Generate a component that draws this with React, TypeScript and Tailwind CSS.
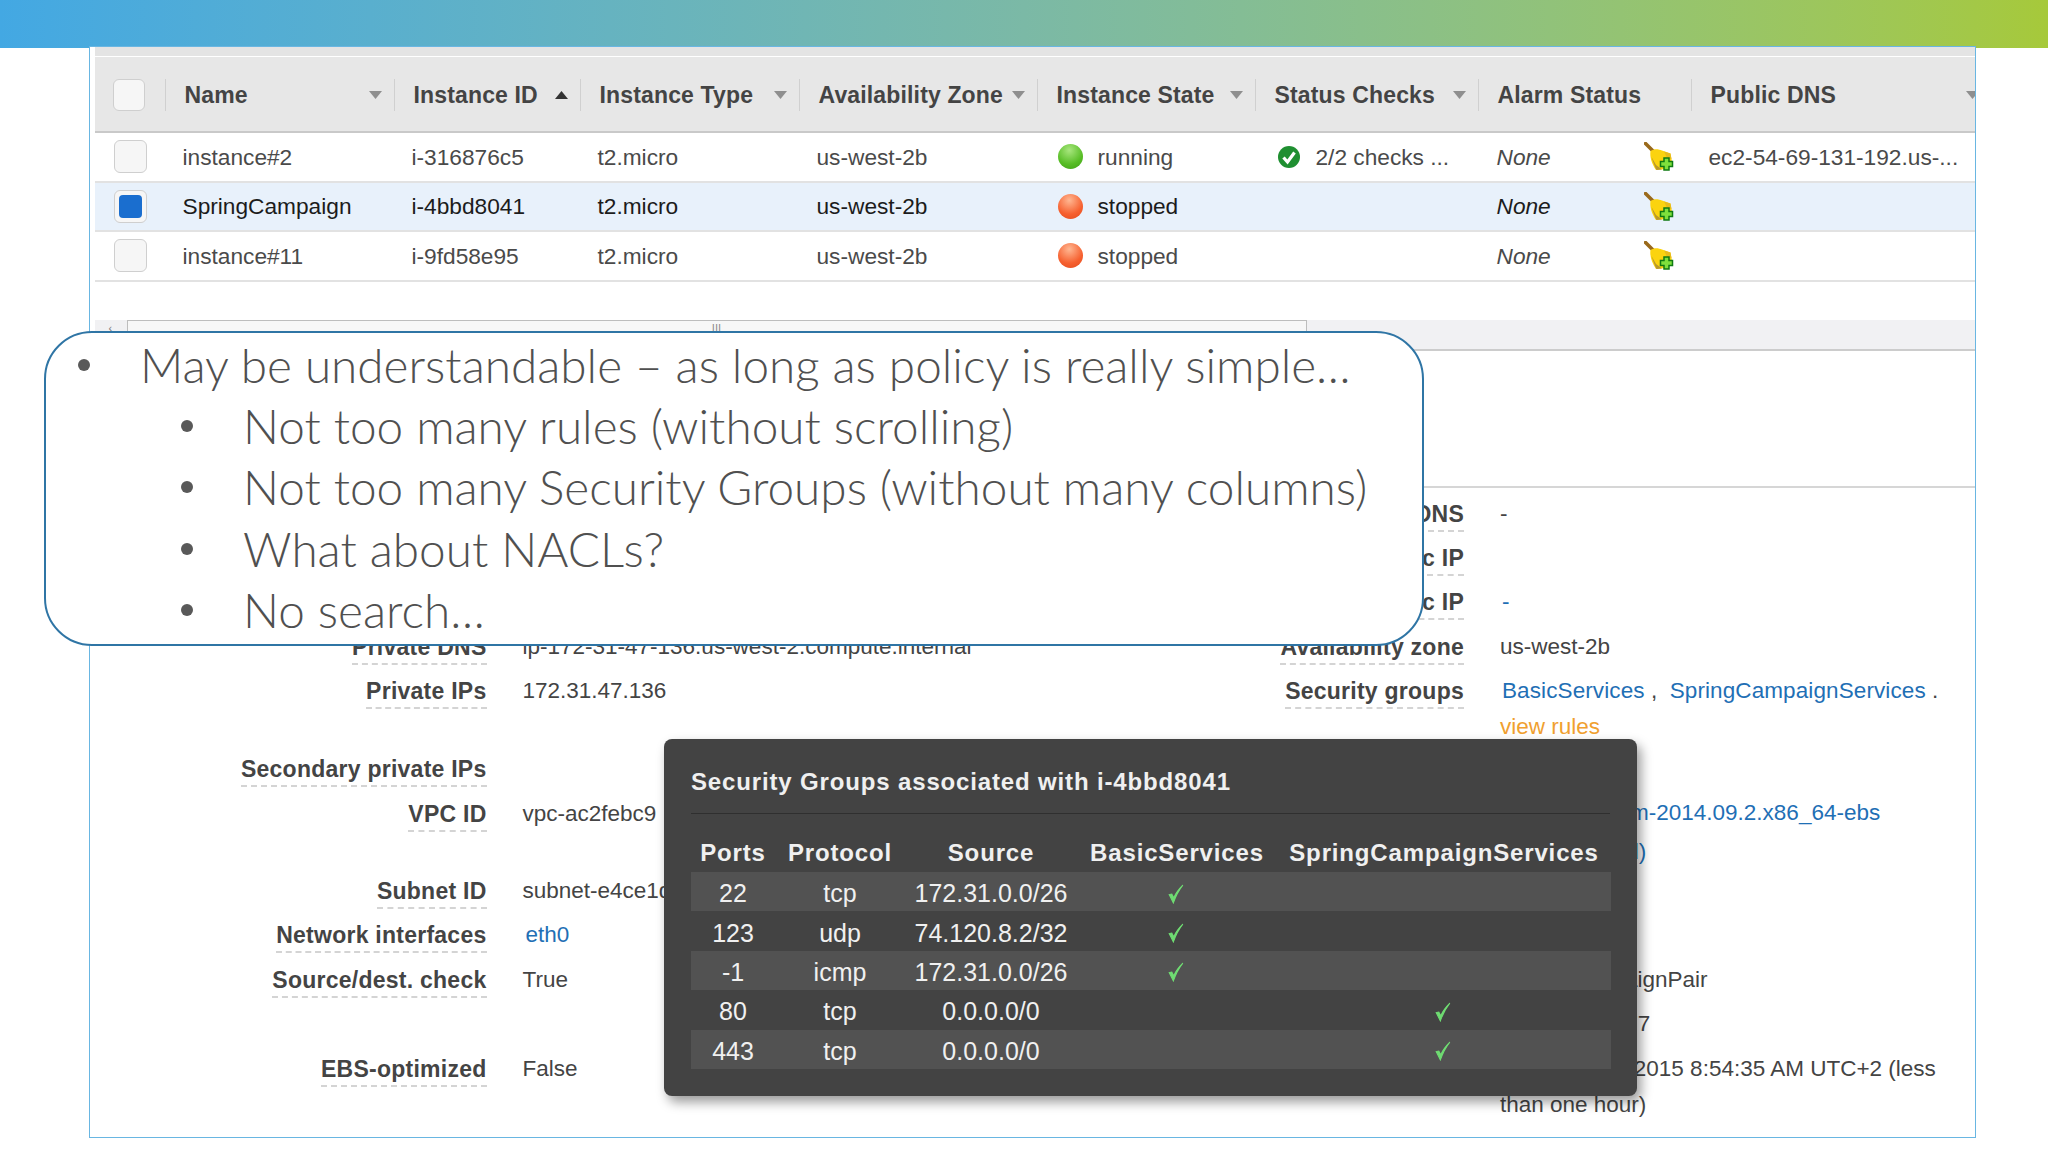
import React from "react";

const arial = "[font-family:'Liberation_Sans',Arial,sans-serif]";

const columns = [
  { label: "Name", arrow: "down" },
  { label: "Instance ID", arrow: "up" },
  { label: "Instance Type", arrow: "down" },
  { label: "Availability Zone", arrow: "down" },
  { label: "Instance State", arrow: "down" },
  { label: "Status Checks", arrow: "down" },
  { label: "Alarm Status", arrow: "" },
  { label: "Public DNS", arrow: "edge" },
];

const instances = [
  { name: "instance#2", id: "i-316876c5", state: "running", checks: "2/2 checks ...", dns: "ec2-54-69-131-192.us-..." },
  { name: "SpringCampaign", id: "i-4bbd8041", state: "stopped", selected: true },
  { name: "instance#11", id: "i-9fd58e95", state: "stopped" },
];

const rules = [
  { port: "22", proto: "tcp", source: "172.31.0.0/26", basic: true },
  { port: "123", proto: "udp", source: "74.120.8.2/32", basic: true },
  { port: "-1", proto: "icmp", source: "172.31.0.0/26", basic: true },
  { port: "80", proto: "tcp", source: "0.0.0.0/0", spring: true },
  { port: "443", proto: "tcp", source: "0.0.0.0/0", spring: true },
];

function Arrow({ up, dark }: { up?: boolean; dark?: boolean }) {
  return (
    <svg width="13" height="8" viewBox="0 0 13 8" className="shrink-0">
      <path d={up ? "M6.5 0 L13 8 L0 8 Z" : "M0 0 L13 0 L6.5 8 Z"} fill={dark ? "#333" : "#8f8f8f"} />
    </svg>
  );
}

function Checkbox({ checked, big }: { checked?: boolean; big?: boolean }) {
  return (
    <div className={`${big ? "w-[33px] h-[33px]" : "w-8 h-8"} rounded-md border border-[#cfcfcf] bg-[#f6f6f6] flex items-center justify-center`}>
      {checked && <div className="w-[23px] h-[23px] rounded-[4px] bg-[#1a6ecf]" />}
    </div>
  );
}

function Broom() {
  return (
    <svg width="30" height="29" viewBox="0 0 30 29">
      <path d="M1.5 1.5 L10 10" stroke="#9a6a1c" strokeWidth="3.6" strokeLinecap="round" />
      <path d="M6.5 9 C11 6 15 7.5 18 8.5 L26.5 11.5 L28 20 L22 27 L12 28 C8 22 5.5 15 6.5 9 Z" fill="#fbd30f" />
      <path d="M7.5 15 C9 20 11 25 12.5 28 L18 27.5 L12 23 Z" fill="#b9982c" />
      <path d="M20 9.5 L26.5 11.5 L27.5 17 L23 16 Z" fill="#e8bb1c" />
      <path d="M20 16 H25 V19.5 H28.5 V24.5 H25 V28 H20 V24.5 H16.5 V19.5 H20 Z" fill="#7fe03c" stroke="#0f7a12" strokeWidth="1.5" />
    </svg>
  );
}

function CheckCircle() {
  return (
    <svg width="22" height="22" viewBox="0 0 22 22">
      <circle cx="11" cy="11" r="11" fill="#1f8f31" />
      <path d="M5.5 11.5 L9.5 16 L16.5 6.5" fill="none" stroke="#fff" strokeWidth="3.2" />
    </svg>
  );
}

function Tick() {
  return (
    <svg width="20" height="20" viewBox="0 0 19 19" className="mx-auto -translate-x-px translate-y-0.5">
      <path d="M3 10 L7 18 C9 12 12 6 16 1 C12 5 9 9 7.4 13 L5.5 9.5 Z" fill="#6fdc72" stroke="#6fdc72" strokeWidth="1" />
    </svg>
  );
}

function DetailRow({ label, children, className }: { label?: string; children?: React.ReactNode; className?: string }) {
  return (
    <div className={`flex h-[44.4px] pt-2 ${className || ""}`}>
      <div className="flex-1 flex justify-end items-start">
        {label && (
          <span className="h-[32px] leading-7 font-bold text-[23px] tracking-[0.25px] text-[#444] border-b-2 border-dashed border-[#d4d4d4] whitespace-nowrap">
            {label}
          </span>
        )}
      </div>
      <div className="w-[476px] shrink-0 pl-9 leading-7 text-[22.5px] text-[#444] whitespace-nowrap">{children}</div>
    </div>
  );
}

function Bullet({ text, sub }: { text: string; sub?: boolean }) {
  return (
    <li className={`flex items-center h-[61.3px] ${sub ? "pl-[135px]" : "pl-8"}`}>
      <span className="w-3 h-3 rounded-full bg-[#595959] shrink-0 mr-[50px]" />
      <span className="whitespace-nowrap">{text}</span>
    </li>
  );
}

export default function App() {
  return (
    <div className={`relative w-[2048px] h-[1152px] overflow-hidden bg-white ${arial}`}>
      <div className="h-12 bg-gradient-to-r from-[#43a8e3] via-[#7bb9a6] to-[#a6c93a]" />

      {/* screenshot frame */}
      <div className="-mt-0.5 ml-[89px] w-[1887px] h-[1092px] border-[1.5px] border-[#69b6e2] pl-[4.5px] overflow-hidden bg-white">
        <div className="h-[10px] bg-[#e4e4e4] border-b border-white" />
        <div className="h-[76px] pt-[2px] grid grid-cols-[70px_229px_186px_219px_238px_218px_223px_213px_1fr] items-center bg-[#e7e7e7] border-b-2 border-[#c9c9c9]">
          <div className="pl-[18px]">
            <Checkbox />
          </div>
          {columns.map((c) => (
            <div key={c.label} className="flex items-center justify-between h-8 border-l border-[#d0d0d0] pl-[19px] pr-3">
              <span className="font-bold text-[23px] text-[#444] tracking-[0.15px] whitespace-nowrap">{c.label}</span>
              {c.arrow === "down" && <Arrow />}
              {c.arrow === "up" && <Arrow up dark />}
              {c.arrow === "edge" && (
                <span className="-mr-4">
                  <Arrow />
                </span>
              )}
            </div>
          ))}
        </div>

        {instances.map((row) => (
          <div
            key={row.id}
            className={`h-[49.5px] grid grid-cols-[70px_229px_186px_219px_238px_218px_223px_213px_1fr] items-center border-b-2 border-[#e2e2e2] text-[22.7px] whitespace-nowrap ${
              row.selected ? "bg-[#e8f1fb] text-[#1c1c1c]" : "bg-white text-[#4a4a4a]"
            }`}
          >
            <div className="pl-[19px]">
              <Checkbox checked={row.selected} big />
            </div>
            <div className="pl-[18px]">{row.name}</div>
            <div className="pl-[18px]">{row.id}</div>
            <div className="pl-[18px]">t2.micro</div>
            <div className="pl-[18px]">us-west-2b</div>
            <div className="pl-[21px] flex items-center gap-[15px]">
              <span
                className={`w-[25px] h-[25px] rounded-full ${
                  row.state === "running"
                    ? "bg-[radial-gradient(circle_at_45%_25%,#a8e67e,#57bd25_60%,#3f9e18)]"
                    : "bg-[radial-gradient(circle_at_45%_25%,#ffb792,#f6602f_60%,#e34a1c)]"
                }`}
              />
              {row.state}
            </div>
            <div className="pl-[23px] flex items-center gap-4">
              {row.checks && <CheckCircle />}
              {row.checks}
            </div>
            <div className="pl-[19px] flex items-center italic">
              None
              <span className="ml-[93px]">
                <Broom />
              </span>
            </div>
            <div className="pl-[18px]">{row.dns}</div>
          </div>
        ))}

        <div className="h-[38px]" />
        <div className="h-[31px] bg-[#f1f1f3] border-b-2 border-[#cccccc] flex">
          <span className="w-[32px] pl-[14px] text-[11px] leading-4 text-[#777]">‹</span>
          <div className="w-[1180px] h-full border-x border-t border-[#bdbdbd] bg-[#f7f7f7] flex justify-center">
            <span className="text-[12px] leading-4 text-[#888]">|||</span>
          </div>
        </div>
        <div className="h-[137px] border-b-2 border-[#d6d6d6]" />

        {/* description tab */}
        <div className="flex pt-[4px]">
          <div className="w-[868px] shrink-0">
            <DetailRow label="Private DNS" className="mt-[133px]">ip-172-31-47-136.us-west-2.compute.internal</DetailRow>
            <DetailRow label="Private IPs">172.31.47.136</DetailRow>
            <DetailRow label="Secondary private IPs" className="mt-[34px]" />
            <DetailRow label="VPC ID">vpc-ac2febc9</DetailRow>
            <DetailRow label="Subnet ID" className="mt-[33px]">subnet-e4ce1d93</DetailRow>
            <DetailRow label="Network interfaces">
              <span className="ml-[3px] text-[#1f6fb5]">eth0</span>
            </DetailRow>
            <DetailRow label="Source/dest. check">True</DetailRow>
            <DetailRow label="EBS-optimized" className="mt-[45px]">False</DetailRow>
          </div>
          <div className="flex-1 mr-[35px]">
            <DetailRow label="Public DNS">-</DetailRow>
            <DetailRow label="Public IP" />
            <DetailRow label="Elastic IP">
              <span className="ml-0.5 text-[#1f6fb5]">-</span>
            </DetailRow>
            <DetailRow label="Availability zone">us-west-2b</DetailRow>
            <DetailRow label="Security groups">
              <div className="ml-0.5 text-[#1f6fb5] tracking-[0.1px]">
                BasicServices<span className="text-[#444] mr-[6px]"> , </span>SpringCampaignServices<span className="text-[#444]"> .</span>
              </div>
              <div className="mt-2 text-[#f0a030]">view rules</div>
            </DetailRow>
            <DetailRow className="mt-[78px]">
              <div className="text-[#1f6fb5]">amzn-ami-hvm-2014.09.2.x86_64-ebs</div>
              <div className="mt-[11px] text-[#1f6fb5]">(ami-e7527ed)</div>
            </DetailRow>
            <DetailRow className="mt-[33px]" />
            <DetailRow />
            <DetailRow>SpringCampaignPair</DetailRow>
            <DetailRow>281912345677</DetailRow>
            <DetailRow className="mt-px">
              <div>February 15, 2015 8:54:35 AM UTC+2 (less</div>
              <div className="mt-2">than one hour)</div>
            </DetailRow>
          </div>
        </div>
      </div>

      {/* callout over the screenshot */}
      <div className="absolute left-[44px] top-[331px] w-[1380px] h-[315px] rounded-[48px] border-2 border-[#2f75a5] bg-white overflow-hidden pt-px text-[#505050] font-light text-[47.7px] [font-family:'Lato',sans-serif]">
        <ul>
          <Bullet text="May be understandable – as long as policy is really simple…" />
          <Bullet sub text="Not too many rules (without scrolling)" />
          <Bullet sub text="Not too many Security Groups (without many columns)" />
          <Bullet sub text="What about NACLs?" />
          <Bullet sub text="No search…" />
        </ul>
      </div>

      {/* security groups popover */}
      <div className="absolute left-[664px] top-[739px] w-[973px] h-[357px] rounded-lg bg-[#434343] shadow-[4px_6px_12px_rgba(0,0,0,0.4)] px-[27px] text-[#f0f0f0]">
        <div className="h-[75px] pt-[27px] font-bold text-[24px] leading-8 tracking-[0.85px] border-b border-[#2f2f2f]">
          Security Groups associated with i-4bbd8041
        </div>
        <table className="mt-[20px] w-[920px] table-fixed border-collapse text-center text-[25px] leading-8">
          <colgroup>
            <col className="w-[84px]" />
            <col className="w-[130px]" />
            <col className="w-[172px]" />
            <col className="w-[200px]" />
            <col className="w-[334px]" />
          </colgroup>
          <thead>
            <tr className="h-[38px] font-bold text-[24px] tracking-[0.85px]">
              <th>Ports</th>
              <th>Protocol</th>
              <th>Source</th>
              <th>BasicServices</th>
              <th>SpringCampaignServices</th>
            </tr>
          </thead>
          <tbody>
            {rules.map((r, i) => (
              <tr key={r.port} className={`h-[39.4px] ${i % 2 === 0 ? "bg-[#525252]" : ""}`}>
                <td className="pt-[3px]">{r.port}</td>
                <td className="pt-[3px]">{r.proto}</td>
                <td className="pt-[3px]">{r.source}</td>
                <td>{r.basic && <Tick />}</td>
                <td>{r.spring && <Tick />}</td>
              </tr>
            ))}
          </tbody>
        </table>
      </div>
    </div>
  );
}
